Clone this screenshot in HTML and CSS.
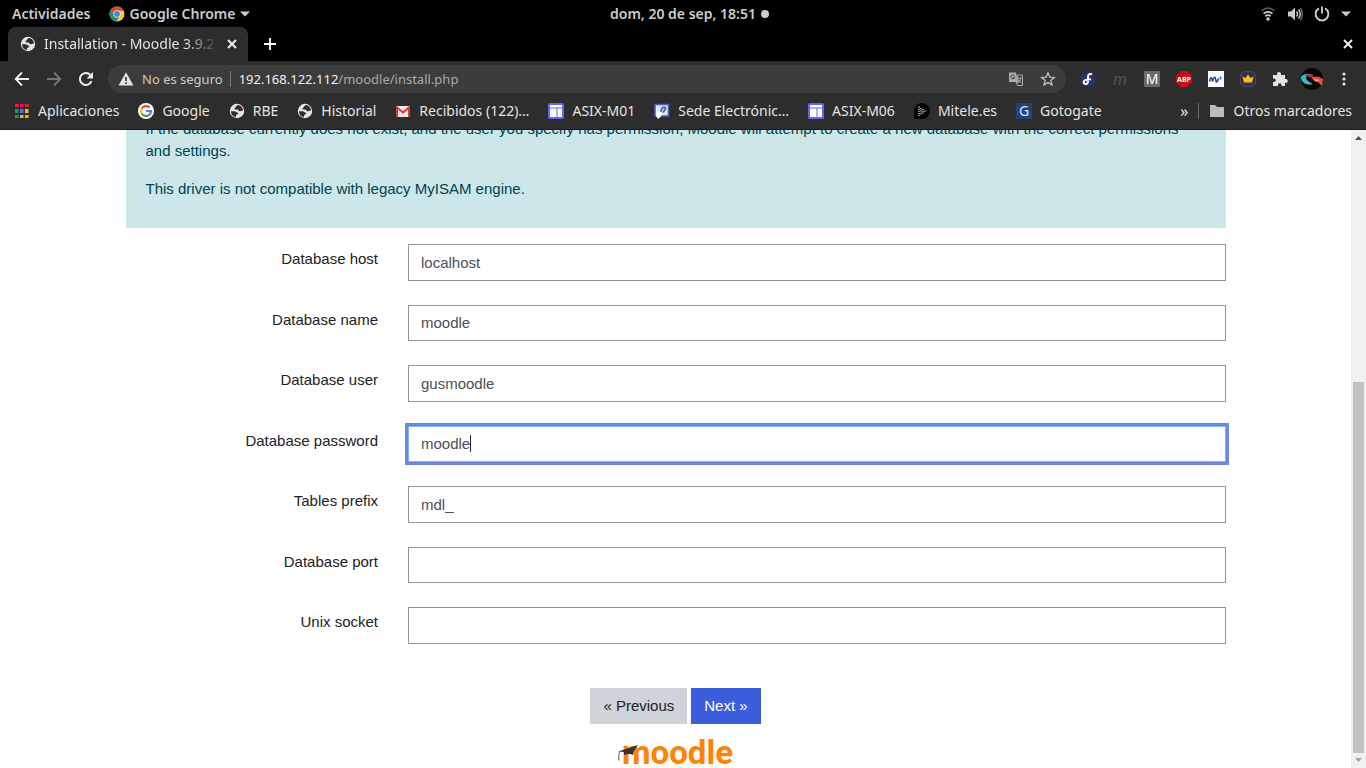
FILE: index.html
```html
<!DOCTYPE html>
<html lang="es">
<head>
<meta charset="utf-8">
<title>Installation - Moodle 3.9.2</title>
<link rel="stylesheet" href="styles.css">
</head>
<body>
<svg width="0" height="0" class="defs" aria-hidden="true">
  <symbol id="globe" viewBox="0 0 16 16"><circle cx="8" cy="8" r="7.2" fill="#e4e4e4"/><path d="M2 8.3h3.500c1.500 0 1.600 1.200 3 1.400 1 .2.9 1 .3 1.600-.8.7-2 .3-1.900 1.400v1.500C4 13.800 2 11.500 2 8.300zM8.500 2c-.2 1.200-1.700.9-1.700 2.100 0 .9-1.500.5-1.300 1.600.2.900 1.800.6 2.800.7 1.300.1 1 1.900 2.400 1.900 1 0 1.200-1 3.300-.9C13.800 4.500 11.500 2 8.500 2z" fill="#2d2d2d"/></symbol>
  <symbol id="board" viewBox="0 0 16 16"><rect width="16" height="16" rx="1.500" fill="#6264f4"/><path d="M2 2h12v2.500H2zM2 5.500h6.500V14H2zM9.500 5.500H14V14H9.500z" fill="#fff"/></symbol>
</svg>

<header class="browser">
  <div class="system-bar">
    <div class="system-side">
      <button class="plain">Actividades</button>
      <button class="plain app-menu">
        <svg class="icon" viewBox="0 0 16 16"><circle cx="8" cy="8" r="7.500" fill="#f2c73c"/><path d="M8 8 1.500 4.300A7.500 7.500 0 0 0 7.300 15.500L11.200 9.500z" fill="#21935a"/><path d="M1.500 4.300a7.500 7.500 0 0 1 13.200.5H8L5 9.800z" fill="#d8463b"/><circle cx="8" cy="8" r="3.700" fill="#eee"/><circle cx="8" cy="8" r="2.900" fill="#4384e8"/></svg>
        <span>Google Chrome</span>
        <svg class="arrow" viewBox="0 0 10 6"><path d="M0 .5h10L5 5.500z" fill="#ccc"/></svg>
      </button>
    </div>
    <button class="plain clock">dom, 20 de sep, 18:51 <span class="dot"></span></button>
    <div class="system-side status">
      <svg class="icon" viewBox="0 0 16 16" fill="none" stroke-width="1.700"><path d="M1.500 4.800c4-3.300 9-3.300 13 0" stroke="#555"/><path d="M3.500 7.600c3-2.300 6-2.300 9 0M5.300 10.200c2-1.500 3.500-1.500 5.400 0" stroke="#ccc"/><circle cx="8" cy="13" r="1.800" fill="#ccc"/></svg>
      <svg class="icon" viewBox="0 0 16 16" fill="none" stroke-width="1.500"><path d="M1 5.500h3l4-4v13l-4-4H1z" fill="#ccc"/><path d="M9.500 5.500c1.300 1.500 1.300 3.500 0 5M11.500 3.500c2.200 2.700 2.200 6.300 0 9" stroke="#ccc"/><path d="M13.500 2c2.500 3.500 2.500 8.500 0 12" stroke="#666"/></svg>
      <svg class="icon" viewBox="0 0 16 16" fill="none" stroke="#ccc" stroke-width="1.900"><path d="M5 2.400a6.400 6.400 0 1 0 6 0M8 .5v7"/></svg>
      <svg class="arrow" viewBox="0 0 10 6"><path d="M0 .5h10L5 5.500z" fill="#ccc"/></svg>
    </div>
  </div>

  <div class="tab-strip">
    <div class="tab">
      <svg class="icon"><use href="#globe"/></svg>
      <span class="tab-title">Installation - Moodle 3.9.2</span>
      <button class="plain cross" aria-label="Cerrar pestaña"><svg viewBox="0 0 10 10"><path d="m1 1 8 8M9 1 1 9" stroke="#eee" stroke-width="2"/></svg></button>
    </div>
    <button class="plain new-tab" aria-label="Nueva pestaña"><svg viewBox="0 0 12 12"><path d="M6 0v12M0 6h12" stroke="#fff" stroke-width="1.800"/></svg></button>
    <button class="plain cross window-close" aria-label="Cerrar"><svg viewBox="0 0 10 10"><path d="m1 1 8 8M9 1 1 9" stroke="#eee" stroke-width="2"/></svg></button>
  </div>

  <div class="toolbar">
    <nav class="history">
      <button class="plain" aria-label="Atrás"><svg class="icon" viewBox="0 0 16 16" fill="none" stroke="#eee" stroke-width="1.800"><path d="M15 8H2M8 1.500 1.700 8 8 14.500"/></svg></button>
      <button class="plain" aria-label="Adelante"><svg class="icon" viewBox="0 0 16 16" fill="none" stroke="#777" stroke-width="1.800"><path d="M1 8h13M8 1.500 14.300 8 8 14.500"/></svg></button>
      <button class="plain" aria-label="Recargar"><svg class="icon" viewBox="0 0 16 16"><path d="M13.500 10.200A6 6 0 1 1 12.400 4" fill="none" stroke="#eee" stroke-width="2"/><path d="M15 1v6.500H8.500z" fill="#eee"/></svg></button>
    </nav>
    <div class="address">
      <svg class="icon" viewBox="0 0 16 16"><path d="M8 1.200 15.500 14.500H.5z" fill="#e4e4e4"/><path d="M8 6v4M8 11.200v1.800" stroke="#3c3c3c" stroke-width="1.700"/></svg>
      <span class="insecure">No es seguro</span>
      <span class="url"><b>192.168.122.112</b>/moodle/install.php</span>
      <button class="plain" aria-label="Traducir"><svg class="icon" viewBox="0 0 16 16"><path d="M1 1.500h7l2 9.500H1z" fill="#aaa"/><path d="M9 4h5.500v10.500h-5L8.300 11.500h2.200z" fill="none" stroke="#aaa"/><path d="M6.500 4.800a2 2 0 1 0 .3 1.700H5" fill="none" stroke="#3c3c3c"/><path d="M9.700 7h4M12.700 7c-.3 2-1 3-2 4M10.700 8.500l2.600 3.500" fill="none" stroke="#aaa"/></svg></button>
      <button class="plain" aria-label="Marcador"><svg class="icon" viewBox="0 0 16 16"><path d="m8 2 1.800 4.100 4.500.4-3.400 3 1 4.400L8 11.600l-3.900 2.300 1-4.400-3.400-3 4.500-.4z" fill="none" stroke="#bbb" stroke-width="1.400"/></svg></button>
    </div>
    <div class="extensions">
      <svg class="icon" viewBox="0 0 16 16"><circle cx="8" cy="8" r="7.800" fill="#29306f"/><path d="M12 3.300c-2.200-1-4 .2-4 2.400v4.800c0 2-1.700 3-3.300 2.300-1.700-.9-1.200-3.700 1-3.800l5.300-.8" fill="none" stroke="#fff" stroke-width="2"/></svg>
      <span class="ext ext-m">m</span>
      <span class="ext ext-mega">M</span>
      <svg class="icon" viewBox="0 0 16 16"><path d="M4.700 0h6.600L16 4.700v6.600L11.300 16H4.700L0 11.300V4.700z" fill="#c70d12"/><text x="8" y="10.700" class="abp">ABP</text></svg>
      <svg class="icon" viewBox="0 0 16 16"><path d="M0 0h16v16H0z" fill="#fff"/><path d="M1.500 10.500c1-5 2-5 3 0 1-5 3-6 3.500 0 .2 1 1.500.5 2.500-3" fill="none" stroke="#1a4388" stroke-width="1.500"/><path d="M10.500 7h4M12.500 5v4" stroke="#4a8bd4"/></svg>
      <svg class="icon" viewBox="0 0 16 16"><rect x=".5" y=".5" width="15" height="15" rx="4" fill="#35314a" stroke="#4a465d"/><path d="m2.500 5.500 3 1.500L8 3.500 10.500 7l3-1.500-1.500 6H4z" fill="#f7c31a"/></svg>
      <svg class="icon" viewBox="0 0 16 16"><path d="M1 4h4V3a2 2 0 0 1 4 0v1h4v4h.8a2 2 0 0 1 0 4H13v3H9.500v-1a1.800 1.800 0 0 0-3.600 0v1H1v-4h1a1.800 1.800 0 0 0 0-3.600H1z" fill="#e4e4e4"/></svg>
      <svg class="avatar" viewBox="0 0 22 22"><circle cx="11" cy="11" r="11" fill="#050505"/><path d="M0 9c3-4 8-4 12-2-5 0-7 1-7 3s3 4 7 6C6 18 0 15 0 9z" fill="#3fb6cc"/><path d="M4 8c3-3 7-2 9 0L9 9.500 6 8z" fill="#9b3937"/><path d="M10 9c4-1 8-1 12 2l-1 7c-2-1-3-5-8-5z" fill="#e74d35"/><path d="m13 11 6 1-4 2z" fill="#f9a08b"/></svg>
      <button class="plain more" aria-label="Menú"><svg class="icon" viewBox="0 0 16 16" fill="#e4e4e4"><circle cx="8" cy="3" r="1.600"/><circle cx="8" cy="8" r="1.600"/><circle cx="8" cy="13" r="1.600"/></svg></button>
    </div>
  </div>

  <nav class="bookmarks">
    <a href="#"><svg class="icon" viewBox="0 0 16 16"><path d="M1 1h3.500v3H1zM6 1h3.500v3H6zM11 1h3.500v3H11z" fill="#f13"/><path d="M1 6h3.500v4H1zM1 12h3.500v3H1z" fill="#1aa04c"/><path d="M6 6h3.500v4H6z" fill="#4c6fff"/><path d="M11 6h3.500v4H11zM6 12h3.500v3H6zM11 12h3.500v3H11z" fill="#f9b21b"/></svg>Aplicaciones</a>
    <a href="#"><svg class="icon" viewBox="0 0 16 16"><circle cx="8" cy="8" r="8" fill="#fff"/><g fill="none" stroke-width="2.200"><path d="M11.600 4.600A5 5 0 0 0 3.700 5.500" stroke="#ea4335"/><path d="M3.700 5.500a5 5 0 0 0 0 5" stroke="#fbbc05"/><path d="M3.700 10.500a5 5 0 0 0 7.500 1.400" stroke="#34a853"/><path d="M11.200 11.900A5 5 0 0 0 13 8H8" stroke="#5a78f5"/></g></svg>Google</a>
    <a href="#"><svg class="icon"><use href="#globe"/></svg>RBE</a>
    <a href="#"><svg class="icon"><use href="#globe"/></svg>Historial</a>
    <a href="#"><svg class="icon" viewBox="0 0 16 16"><path d="M1 3h14v11H1z" fill="#e8e8e8"/><path d="M2 14V4.500l6 5 6-5V14" fill="none" stroke="#d93a32" stroke-width="2"/></svg>Recibidos (122)…</a>
    <a href="#"><svg class="icon"><use href="#board"/></svg>ASIX-M01</a>
    <a href="#"><svg class="icon" viewBox="0 0 16 16"><path d="M1 1.500h13.500V13H1z" fill="#dfe6f8" stroke="#4a63ab" stroke-width="1.500"/><path d="M6 10 8 5.500c1-2 4-2 3.500.3L9 9.500" fill="none" stroke="#4a63ab" stroke-width="1.800"/><path d="M2 9.500 5.500 8 8 10.500l-1 3L4 16 2 13z" fill="#fff"/></svg>Sede Electrónic…</a>
    <a href="#"><svg class="icon"><use href="#board"/></svg>ASIX-M06</a>
    <a href="#"><svg class="icon" viewBox="0 0 16 16"><path d="M0 15V8a8 8 0 1 1 8 8H0z" fill="#050505"/><path d="M5 3.500v9.500M7 5v7M9 6v5M11 7.500v2" stroke="#e4e4e4" stroke-width="1.300" stroke-dasharray="1.200 1"/></svg>Mitele.es</a>
    <a href="#"><span class="gotogate">G</span>Gotogate</a>
    <button class="plain overflow" aria-label="Más marcadores">»</button>
    <a href="#" class="others"><svg class="icon" viewBox="0 0 16 16"><path d="M1 2h5l2 2h7v10H1z" fill="#bdbdbd"/></svg>Otros marcadores</a>
  </nav>
</header>

<div class="viewport">
  <main class="page">
    <div class="container">
      <section class="notice">
        <p>If the database currently does not exist, and the user you specify has permission, Moodle will attempt to create a new database with the correct permissions and settings.</p>
        <p>This driver is not compatible with legacy MyISAM engine.</p>
      </section>
      <form>
        <div class="row"><label for="host">Database host</label><div class="field"><input id="host" type="text" value="localhost"></div></div>
        <div class="row"><label for="name">Database name</label><div class="field"><input id="name" type="text" value="moodle"></div></div>
        <div class="row"><label for="user">Database user</label><div class="field"><input id="user" type="text" value="gusmoodle"></div></div>
        <div class="row"><label for="pass">Database password</label><div class="field"><input id="pass" class="focused" type="text" value="moodle"><span class="caret"></span></div></div>
        <div class="row"><label for="prefix">Tables prefix</label><div class="field"><input id="prefix" type="text" value="mdl_"></div></div>
        <div class="row"><label for="port">Database port</label><div class="field"><input id="port" type="text"></div></div>
        <div class="row"><label for="socket">Unix socket</label><div class="field"><input id="socket" type="text"></div></div>
        <div class="actions"><button type="button" class="btn">« Previous</button><button type="button" class="btn primary">Next »</button></div>
      </form>
      <footer><a class="logo" href="#">moodle<svg class="cap" viewBox="0 0 22 18"><path d="M0 6.500 20 0l-4 6-1 4c-2-1.500-6-1.500-9 0V7z" fill="#333"/><path d="M1.500 6.500c-1 4-.8 7-.5 9" fill="none" stroke="#555"/></svg></a></footer>
    </div>
  </main>
  <div class="scrollbar" aria-hidden="true">
    <svg viewBox="0 0 15 15"><path d="M4 10h7L7.500 6z" fill="#505050"/></svg>
    <div class="track"><div class="thumb"></div></div>
    <svg viewBox="0 0 15 15"><path d="M4 5h7L7.500 9z" fill="#a3a3a3"/></svg>
  </div>
</div>
</body>
</html>
```
FILE: styles.css
```css
* { box-sizing: border-box; }
body {
  margin: 0;
  height: 100vh;
  display: flex;
  flex-direction: column;
  overflow: hidden;
  background: #fff;
  font: 15px/1.5 "Liberation Sans", Arial, sans-serif;
  color: #1d2125;
}
svg { display: block; flex: none; }
.defs { position: absolute; }
.plain { border: 0; padding: 0; background: none; color: inherit; font: inherit; }
.icon { width: 16px; height: 16px; }
.arrow { width: 10px; height: 6px; }

.browser {
  flex: none;
  font: 14px/20px "Noto Sans", sans-serif;
  color: #e4e4e4;
  background: #2d2d2d;
  border-bottom: 1px solid #1c1c1c;
}
.system-bar {
  display: flex;
  align-items: center;
  height: 27px;
  padding: 0 15px 0 12px;
  background: #000;
  color: #ccc;
  font-weight: 600;
}
.system-side { flex: 1; display: flex; align-items: center; gap: 18px; }
.app-menu { display: flex; align-items: center; gap: 5px; }
.status { justify-content: flex-end; gap: 11px; }
.clock { display: flex; align-items: center; gap: 5px; margin-left: 16px; }
.dot { width: 8px; height: 8px; border-radius: 50%; background: #ccc; }

.tab-strip {
  display: flex;
  align-items: center;
  height: 34px;
  padding: 0 13px 0 8px;
  background: #000;
}
.tab {
  display: flex;
  align-items: center;
  gap: 8px;
  width: 240px;
  height: 34px;
  padding: 0 11px 0 12px;
  background: #2d2d2d;
  border-radius: 8px 8px 0 0;
}
.tab-title {
  flex: 1;
  overflow: hidden;
  white-space: nowrap;
  -webkit-mask-image: linear-gradient(90deg, #000 80%, transparent);
  mask-image: linear-gradient(90deg, #000 80%, transparent);
}
.cross svg { width: 10px; height: 10px; }
.new-tab { margin-left: 16px; }
.new-tab svg { width: 12px; height: 12px; }
.window-close { margin-left: auto; }

.toolbar { display: flex; align-items: center; height: 36px; padding: 0 14px; gap: 14px; }
.history { display: flex; gap: 16px; }
.address {
  flex: 1;
  display: flex;
  align-items: center;
  gap: 8px;
  height: 28px;
  padding: 0 10px;
  border-radius: 14px;
  background: #3c3c3c;
  font-size: 13px;
}
.address button { margin-left: 8px; }
.insecure { padding-right: 7px; border-right: 1px solid #777; line-height: 16px; color: #ccc; }
.url { flex: 1; color: #aaa; }
.url b { font-weight: 400; color: #f1f1f1; }
.extensions { display: flex; align-items: center; gap: 16px; }
.ext { width: 16px; height: 16px; line-height: 16px; text-align: center; }
.ext-m { color: #555; font-style: italic; font-size: 16px; }
.ext-mega { background: #6b6b6b; color: #fff; border-radius: 1px; }
.abp { font: 700 7px "Noto Sans", sans-serif; fill: #fff; text-anchor: middle; }
.avatar { width: 22px; height: 22px; margin: 0 -3px; }

.bookmarks { display: flex; align-items: center; gap: 19px; height: 32px; padding: 0 14px 4px; white-space: nowrap; }
.bookmarks a { display: flex; align-items: center; gap: 8px; color: #e4e4e4; text-decoration: none; }
.gotogate { width: 16px; height: 16px; line-height: 16px; text-align: center; background: #1d4480; }
.overflow { margin-left: auto; font-size: 16px; }
.bookmarks .others { padding-left: 10px; margin-left: -9px; border-left: 1px solid #666; line-height: 16px; }

.viewport { flex: 1; min-height: 0; display: flex; overflow: hidden; }
.page { flex: 1; overflow: hidden; }
.container { max-width: 1100px; margin: -12px auto 0; }
.notice { padding: 0 20px 12px; margin-bottom: 16px; background: #cce6ea; color: #00434e; line-height: 22px; }
.notice p { margin: 0; padding-bottom: 16px; }

.row { display: flex; margin: 0 -15px 24px; }
.row label { width: 25%; padding: 4px 15px 0; text-align: right; }
.field { position: relative; flex: 1; padding: 0 15px; }
.field input {
  display: block;
  width: 100%;
  padding: 6px 12px;
  border: 1px solid #8f959e;
  border-radius: 0;
  background: #fff;
  color: #495057;
  font: inherit;
  height: calc(1.5em + 14px);
}
.field .focused { border-color: #7eb0fb; box-shadow: 0 0 0 3px #6d88e3; outline: 0; }
.caret { position: absolute; left: 77px; top: 9px; width: 1px; height: 17px; background: #222; }

.actions { display: flex; justify-content: center; gap: 4px; padding-top: 20px; }
.btn { padding: 6px 12px; border: 1px solid #ced4da; background: #ced4da; color: #1d2125; font: inherit; }
.btn.primary { border-color: #3b5fdc; background: #3b5fdc; color: #fff; }
footer { display: flex; justify-content: center; padding-top: 14px; }
.logo { position: relative; padding-left: 4px; color: #ff8300; font: 700 33px/30px Roboto, sans-serif; text-decoration: none; }
.cap { position: absolute; left: 0; top: 7px; width: 22px; height: 18px; }

.scrollbar { flex: none; width: 15px; display: flex; flex-direction: column; background: #f1f1f1; }
.scrollbar svg { width: 15px; height: 15px; }
.track { flex: 1; display: flex; flex-direction: column; justify-content: flex-end; padding: 0 2px; }
.thumb { height: 61%; background: #c1c1c1; }
```
